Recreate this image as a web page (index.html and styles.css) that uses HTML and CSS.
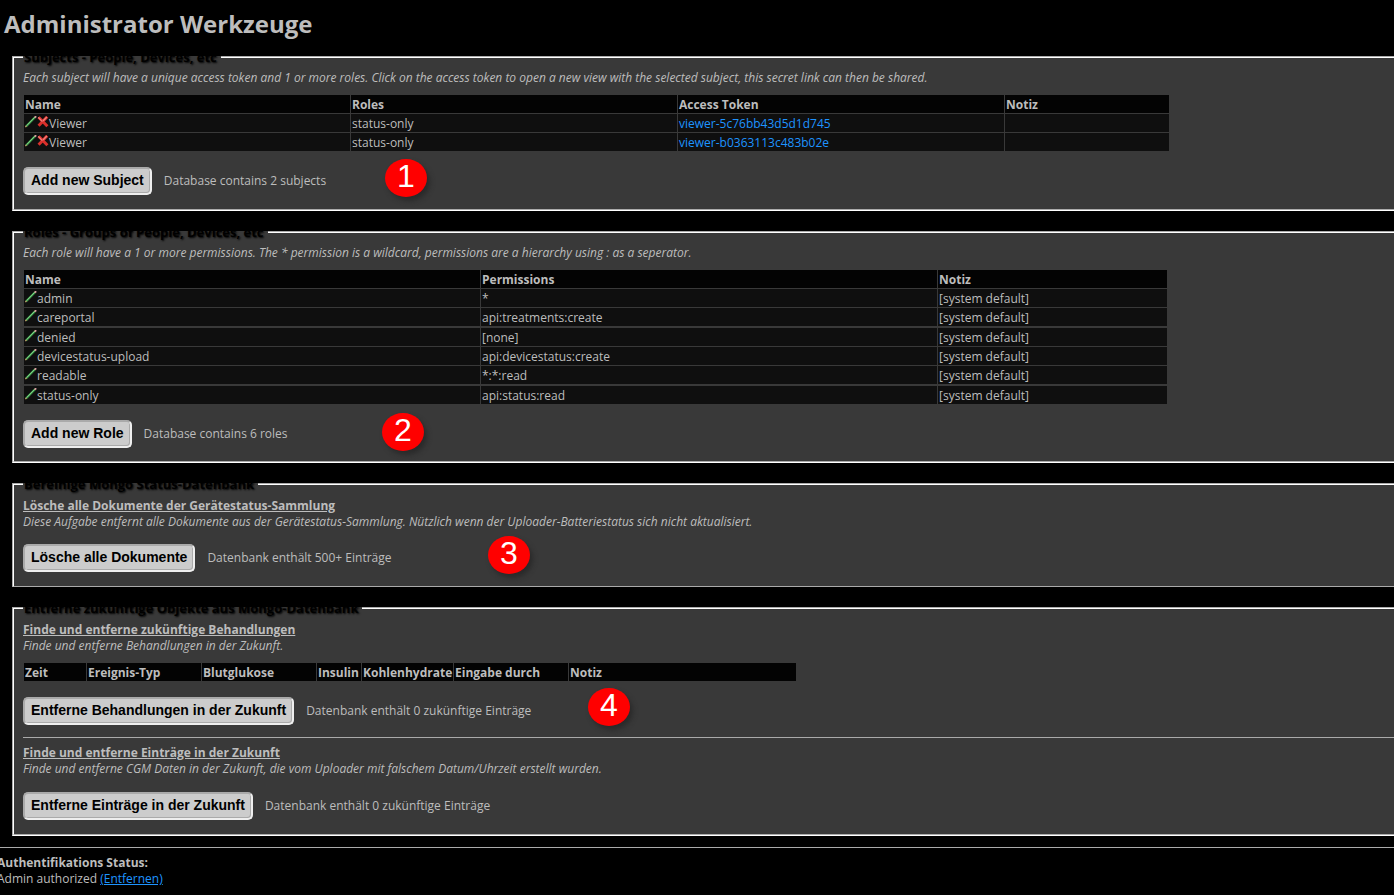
FILE: index.html
```html
<!DOCTYPE html>
<html lang="de">
<head>
<meta charset="utf-8">
<title>Administrator Werkzeuge</title>
<link rel="stylesheet" href="styles.css">
</head>
<body>
<svg class="sprite" width="0" height="0" aria-hidden="true">
  <symbol id="edit" viewBox="0 0 12 12">
    <path d="M1 10.5 10 1.2" stroke="#3f9b4c" stroke-width="2"/>
    <path d="M1.6 9.6 9.8 1.2" stroke="#8fdc94" stroke-width="0.8"/>
    <path d="M9.6 1.6 11.2 0.2" stroke="#d9a0a0" stroke-width="1.8"/>
    <path d="M0.4 11 1.4 9.9" stroke="#c9a06a" stroke-width="1.2"/>
  </symbol>
  <symbol id="delete" viewBox="0 0 12 12">
    <path d="M1.6 1.2 10.4 10.2M10.2 0.8 1.6 9.8" stroke="#d9302c" stroke-width="3"/>
    <path d="M1.2 1.4 5.4 5.6M9.8 1 6 5" stroke="#f0827c" stroke-width="1.2"/>
  </symbol>
</svg>
<header class="page-header"><h1>Administrator Werkzeuge</h1></header>
<main class="tools">
  <fieldset class="tool tool-subjects">
    <legend>Subjects - People, Devices, etc</legend>
    <p class="description">Each subject will have a unique access token and 1 or more roles. Click on the access token to open a new view with the selected subject, this secret link can then be shared.</p>
    <table class="subjects">
      <colgroup><col class="wide"><col class="wide"><col class="wide"><col></colgroup>
      <thead><tr><th>Name</th><th>Roles</th><th>Access Token</th><th>Notiz</th></tr></thead>
      <tbody>
        <tr><td><svg class="icon"><use href="#edit"/></svg><svg class="icon"><use href="#delete"/></svg>Viewer</td><td>status-only</td><td><a href="#t1">viewer-5c76bb43d5d1d745</a></td><td></td></tr>
        <tr><td><svg class="icon"><use href="#edit"/></svg><svg class="icon"><use href="#delete"/></svg>Viewer</td><td>status-only</td><td><a href="#t2">viewer-b0363113c483b02e</a></td><td></td></tr>
      </tbody>
    </table>
    <div class="action"><button type="button">Add new Subject</button><span>Database contains 2 subjects</span></div>
    <span class="marker marker-1">1</span>
  </fieldset>

  <fieldset class="tool tool-roles">
    <legend>Roles - Groups of People, Devices, etc</legend>
    <p class="description">Each role will have a 1 or more permissions. The * permission is a wildcard, permissions are a hierarchy using : as a seperator.</p>
    <table class="roles">
      <colgroup><col class="wide"><col class="wide"><col></colgroup>
      <thead><tr><th>Name</th><th>Permissions</th><th>Notiz</th></tr></thead>
      <tbody>
        <tr><td><svg class="icon"><use href="#edit"/></svg>admin</td><td>*</td><td>[system default]</td></tr>
        <tr><td><svg class="icon"><use href="#edit"/></svg>careportal</td><td>api:treatments:create</td><td>[system default]</td></tr>
        <tr><td><svg class="icon"><use href="#edit"/></svg>denied</td><td>[none]</td><td>[system default]</td></tr>
        <tr><td><svg class="icon"><use href="#edit"/></svg>devicestatus-upload</td><td>api:devicestatus:create</td><td>[system default]</td></tr>
        <tr><td><svg class="icon"><use href="#edit"/></svg>readable</td><td>*:*:read</td><td>[system default]</td></tr>
        <tr><td><svg class="icon"><use href="#edit"/></svg>status-only</td><td>api:status:read</td><td>[system default]</td></tr>
      </tbody>
    </table>
    <div class="action"><button type="button">Add new Role</button><span>Database contains 6 roles</span></div>
    <span class="marker marker-2">2</span>
  </fieldset>

  <fieldset class="tool tool-status">
    <legend>Bereinige Mongo Status-Datenbank</legend>
    <h2>Lösche alle Dokumente der Gerätestatus-Sammlung</h2>
    <p class="description">Diese Aufgabe entfernt alle Dokumente aus der Gerätestatus-Sammlung. Nützlich wenn der Uploader-Batteriestatus sich nicht aktualisiert.</p>
    <div class="action"><button type="button">Lösche alle Dokumente</button><span>Datenbank enthält 500+ Einträge</span></div>
    <span class="marker marker-3">3</span>
  </fieldset>

  <fieldset class="tool">
    <legend>Entferne zukünftige Objekte aus Mongo-Datenbank</legend>
    <h2>Finde und entferne zukünftige Behandlungen</h2>
    <p class="description">Finde und entferne Behandlungen in der Zukunft.</p>
    <table class="treatments">
      <colgroup><col class="time"><col class="kind"><col class="kind"><col class="insulin"><col class="carbs"><col class="kind"><col></colgroup>
      <thead><tr><th>Zeit</th><th>Ereignis-Typ</th><th>Blutglukose</th><th>Insulin</th><th>Kohlenhydrate</th><th>Eingabe durch</th><th>Notiz</th></tr></thead>
    </table>
    <div class="action"><button type="button">Entferne Behandlungen in der Zukunft</button><span>Datenbank enthält 0 zukünftige Einträge</span></div>
    <hr>
    <h2>Finde und entferne Einträge in der Zukunft</h2>
    <p class="description">Finde und entferne CGM Daten in der Zukunft, die vom Uploader mit falschem Datum/Uhrzeit erstellt wurden.</p>
    <div class="action"><button type="button">Entferne Einträge in der Zukunft</button><span>Datenbank enthält 0 zukünftige Einträge</span></div>
    <span class="marker marker-4">4</span>
  </fieldset>
</main>
<footer class="auth">
  <strong>Authentifikations Status:</strong>
  <div>Admin authorized <a href="#remove">(Entfernen)</a></div>
</footer>
</body>
</html>
```
FILE: styles.css
```css
* { box-sizing: border-box; }
body {
  margin: 0;
  background: #000;
  color: #bdbdbd;
  font: 12px/16px "Open Sans", sans-serif;
  overflow-x: hidden;
}
.sprite { position: absolute; }
.page-header { padding: 7px 4px 8px; }
h1 { margin: 0; font-size: 24px; line-height: 33px; font-weight: 700; }
.tools { display: flex; flex-direction: column; gap: 12px; padding-left: 12px; }
.tool {
  position: relative;
  min-width: 0;
  margin: 0;
  padding: 4px 0 14px 9px;
  border: 2px groove #fff;
  border-right: 0;
  background: #393939;
}
.tool-roles { padding-bottom: 13px; }
.tool-status { border-bottom: 1px solid #aaa; }
legend {
  padding: 0 4px 0 1px;
  color: #000;
  font-size: 13px;
  line-height: 18px;
  font-weight: 700;
  text-shadow: 1px 1px 2px #000;
}
h2 {
  margin: 0;
  font-size: 12px;
  line-height: 17px;
  font-weight: 700;
  text-decoration: underline;
}
.description { margin: 0; font-style: italic; }
table {
  max-width: 100%;
  margin-top: 8px;
  table-layout: fixed;
  border-spacing: 1px;
  background: #393939;
}
.subjects { width: 1147px; }
.roles { width: 1145px; }
.treatments { width: 774px; }
.subjects .wide { width: 326px; }
.roles .wide { width: 456px; }
.time { width: 62px; }
.kind { width: 114px; }
.insulin { width: 44px; }
.carbs { width: 91px; }
th, td {
  height: 18px;
  padding: 2px 1px 0;
  text-align: left;
  white-space: nowrap;
  background: #0f0f0f;
}
th { background: #030303; }
tbody tr:nth-child(3n) td { border-top: 1px solid #393939; height: 19px; }
.icon { width: 12px; height: 12px; vertical-align: 0; fill: none; }
.action { display: flex; align-items: center; gap: 12px; margin-top: 15px; }
.description + .action { margin-top: 15px; }
.tool-status .description + .action { margin-top: 14px; }
button {
  height: 28px;
  padding: 0 6px 2px;
  border: 2px solid;
  border-color: #aaa #eee #eee #aaa;
  border-radius: 5px;
  background: #ccc;
  box-shadow: inset -1px -1px #aaa;
  color: #000;
  font: 700 14px/20px "Liberation Sans", Arial, sans-serif;
}
a { color: #1e94ff; }
td a { text-decoration: none; }
hr { margin: 12px 0 6px; border: 0; border-top: 1px solid #aaa; }
.marker {
  position: absolute;
  width: 42px;
  height: 38px;
  border-radius: 50%;
  background: #f00;
  box-shadow: 3px 4px 5px #2a2a2a;
  color: #fff;
  font: 32px/35px "Liberation Sans", Arial, sans-serif;
  text-align: center;
}
.marker-1 { left: 371px; bottom: 12px; }
.marker-2 { left: 368px; bottom: 10px; }
.marker-3 { left: 474px; bottom: 12px; }
.marker-4 { left: 574px; bottom: 108px; }
.auth { margin: 11px 0 0 -3px; padding-top: 7px; border-top: 1px solid #aaa; }
```
